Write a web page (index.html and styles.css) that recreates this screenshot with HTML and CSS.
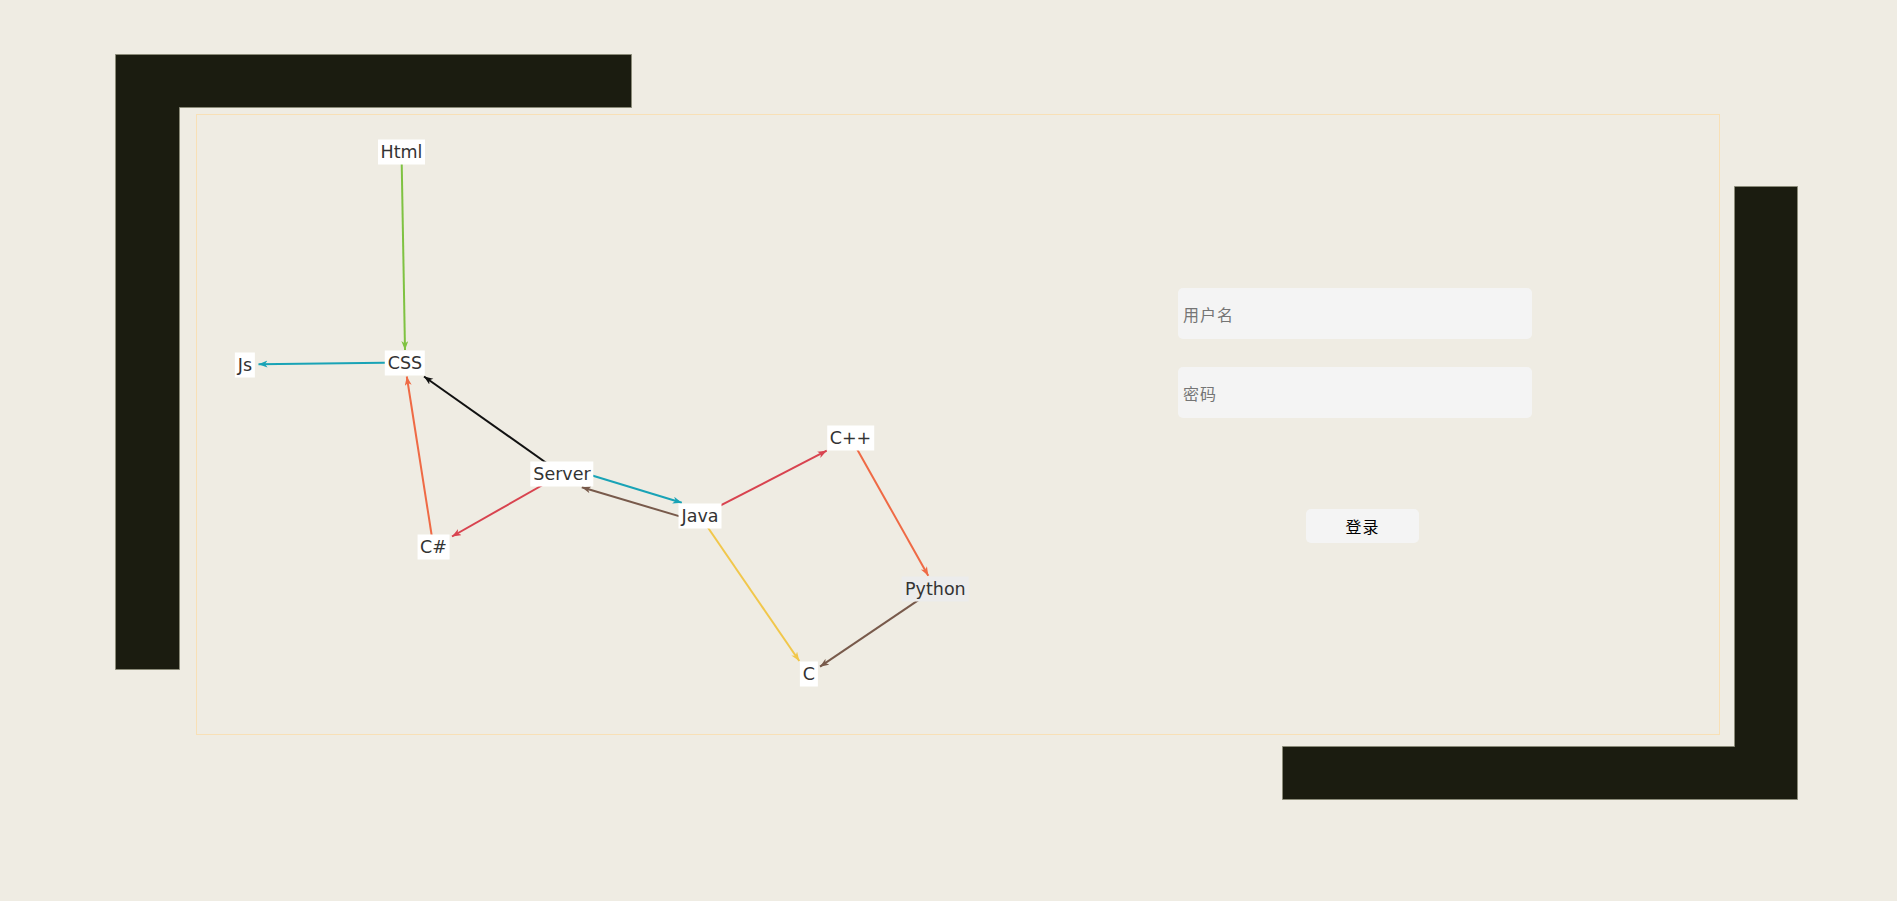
FILE: index.html
```html
<!DOCTYPE html>
<html lang="zh-CN">
<head>
<meta charset="utf-8">
<title>登录</title>
<link rel="stylesheet" href="styles.css">
</head>
<body>
<div class="stage">
  <svg class="deco deco-tl" width="517" height="616" viewBox="0 0 517 616">
    <polygon points="0.5,0.5 516.5,0.5 516.5,53.5 64.5,53.5 64.5,615.5 0.5,615.5" />
  </svg>
  <svg class="deco deco-br" width="516" height="614" viewBox="0 0 516 614">
    <polygon points="452.5,0.5 515.5,0.5 515.5,613.5 0.5,613.5 0.5,560.5 452.5,560.5" />
  </svg>

  <div class="graph">
    <svg class="edges" width="981" height="619" viewBox="0 0 981 619">
      <defs>
        <marker id="m-green" markerUnits="userSpaceOnUse" markerWidth="10" markerHeight="8" refX="9" refY="3.5" orient="auto"><path d="M0,0 L9,3.5 L0,7 L2.5,3.5 z" fill="#7fc242"/></marker>
        <marker id="m-teal" markerUnits="userSpaceOnUse" markerWidth="10" markerHeight="8" refX="9" refY="3.5" orient="auto"><path d="M0,0 L9,3.5 L0,7 L2.5,3.5 z" fill="#19a3b6"/></marker>
        <marker id="m-black" markerUnits="userSpaceOnUse" markerWidth="10" markerHeight="8" refX="9" refY="3.5" orient="auto"><path d="M0,0 L9,3.5 L0,7 L2.5,3.5 z" fill="#111111"/></marker>
        <marker id="m-orange" markerUnits="userSpaceOnUse" markerWidth="10" markerHeight="8" refX="9" refY="3.5" orient="auto"><path d="M0,0 L9,3.5 L0,7 L2.5,3.5 z" fill="#ef6a45"/></marker>
        <marker id="m-red" markerUnits="userSpaceOnUse" markerWidth="10" markerHeight="8" refX="9" refY="3.5" orient="auto"><path d="M0,0 L9,3.5 L0,7 L2.5,3.5 z" fill="#d8434f"/></marker>
        <marker id="m-brown" markerUnits="userSpaceOnUse" markerWidth="10" markerHeight="8" refX="9" refY="3.5" orient="auto"><path d="M0,0 L9,3.5 L0,7 L2.5,3.5 z" fill="#785a4b"/></marker>
        <marker id="m-yellow" markerUnits="userSpaceOnUse" markerWidth="10" markerHeight="8" refX="9" refY="3.5" orient="auto"><path d="M0,0 L9,3.5 L0,7 L2.5,3.5 z" fill="#f1c74b"/></marker>
      </defs>
      <line class="e green" x1="204.5" y1="36.5" x2="208" y2="235" marker-end="url(#m-green)"/>
      <line class="e teal" x1="208" y1="247.5" x2="61.5" y2="249.2" marker-end="url(#m-teal)"/>
      <line class="e black" x1="365" y1="359" x2="227" y2="261.5" marker-end="url(#m-black)"/>
      <line class="e orange" x1="236.5" y1="432" x2="209.8" y2="261.5" marker-end="url(#m-orange)"/>
      <line class="e red" x1="365" y1="359" x2="255" y2="421.5" marker-end="url(#m-red)"/>
      <line class="e teal" x1="373" y1="353.8" x2="484.8" y2="387.7" marker-end="url(#m-teal)"/>
      <line class="e brown" x1="498" y1="405.9" x2="384.8" y2="372.3" marker-end="url(#m-brown)"/>
      <line class="e red" x1="503" y1="401" x2="629.7" y2="335.7" marker-end="url(#m-red)"/>
      <line class="e orange" x1="653.5" y1="322.5" x2="731.3" y2="460.7" marker-end="url(#m-orange)"/>
      <line class="e yellow" x1="503" y1="401" x2="602.3" y2="546" marker-end="url(#m-yellow)"/>
      <line class="e brown" x1="738.4" y1="473.7" x2="623" y2="551.7" marker-end="url(#m-brown)"/>
    </svg>
    <span class="node" style="left:204.5px;top:36.5px">Html</span>
    <span class="node" style="left:208px;top:248px">CSS</span>
    <span class="node" style="left:48px;top:249.5px">Js</span>
    <span class="node" style="left:365px;top:359px">Server</span>
    <span class="node" style="left:503px;top:401px">Java</span>
    <span class="node" style="left:236.5px;top:432px">C#</span>
    <span class="node" style="left:653.5px;top:322.5px">C++</span>
    <span class="node node-muted" style="left:738.4px;top:473.7px">Python</span>
    <span class="node" style="left:611.8px;top:558.5px">C</span>
  </div>

  <form class="login">
    <input class="field" type="text" placeholder="用户名">
    <input class="field" type="password" placeholder="密码">
    <button class="submit" type="button">登录</button>
  </form>
</div>
</body>
</html>
```

FILE: styles.css
```css
html, body {
  margin: 0;
  padding: 0;
}

body {
  background: #efece3;
  font-family: "DejaVu Sans", "Noto Sans", sans-serif;
  min-height: 901px;
  overflow: hidden;
}

.stage {
  position: relative;
  box-sizing: border-box;
  width: 1524px;
  height: 621px;
  margin: 114px 0 0 196px;
  border: 1px solid #f8e0b6;
  display: flex;
}

.deco {
  position: absolute;
  display: block;
}

.deco polygon {
  fill: #1b1c10;
  stroke: #8a8a78;
  stroke-width: 1;
}

.deco-tl {
  left: -82px;
  top: -61px;
}

.deco-br {
  left: 1085px;
  top: 71px;
}

.graph {
  position: relative;
  flex: none;
  width: 981px;
  height: 619px;
}

.edges {
  position: absolute;
  left: 0;
  top: 0;
  display: block;
}

.e {
  stroke-width: 2;
  fill: none;
}

.green { stroke: #7fc242; }
.teal { stroke: #19a3b6; }
.black { stroke: #111111; }
.orange { stroke: #ef6a45; }
.red { stroke: #d8434f; }
.brown { stroke: #785a4b; }
.yellow { stroke: #f1c74b; }

.node {
  position: absolute;
  transform: translate(-50%, -50%);
  background: #ffffff;
  color: #333333;
  font-family: "DejaVu Sans", Verdana, sans-serif;
  font-size: 17.5px;
  line-height: 25px;
  padding: 0 3px;
  white-space: nowrap;
}

.node-muted {
  background: #ececec;
}

.login {
  display: flex;
  flex-direction: column;
  align-items: flex-start;
  padding-top: 173px;
  margin: 0;
}

.field {
  box-sizing: border-box;
  width: 354px;
  height: 51px;
  margin: 0 0 28px 0;
  padding: 0 5px;
  border: none;
  border-radius: 5px;
  background: #f4f4f4;
  font-family: "Noto Sans CJK SC", "Noto Sans", sans-serif;
  font-size: 16px;
  letter-spacing: 1px;
  color: #333;
  outline: none;
}

.field::placeholder {
  color: #757575;
}

.submit {
  box-sizing: border-box;
  width: 113px;
  height: 34px;
  margin: 63px 0 0 128px;
  padding: 0;
  border: none;
  border-radius: 5px;
  background: #f4f4f4;
  color: #000;
  font-family: "Noto Sans CJK SC", "Noto Sans", sans-serif;
  font-size: 16px;
  letter-spacing: 1px;
  cursor: pointer;
}
```
